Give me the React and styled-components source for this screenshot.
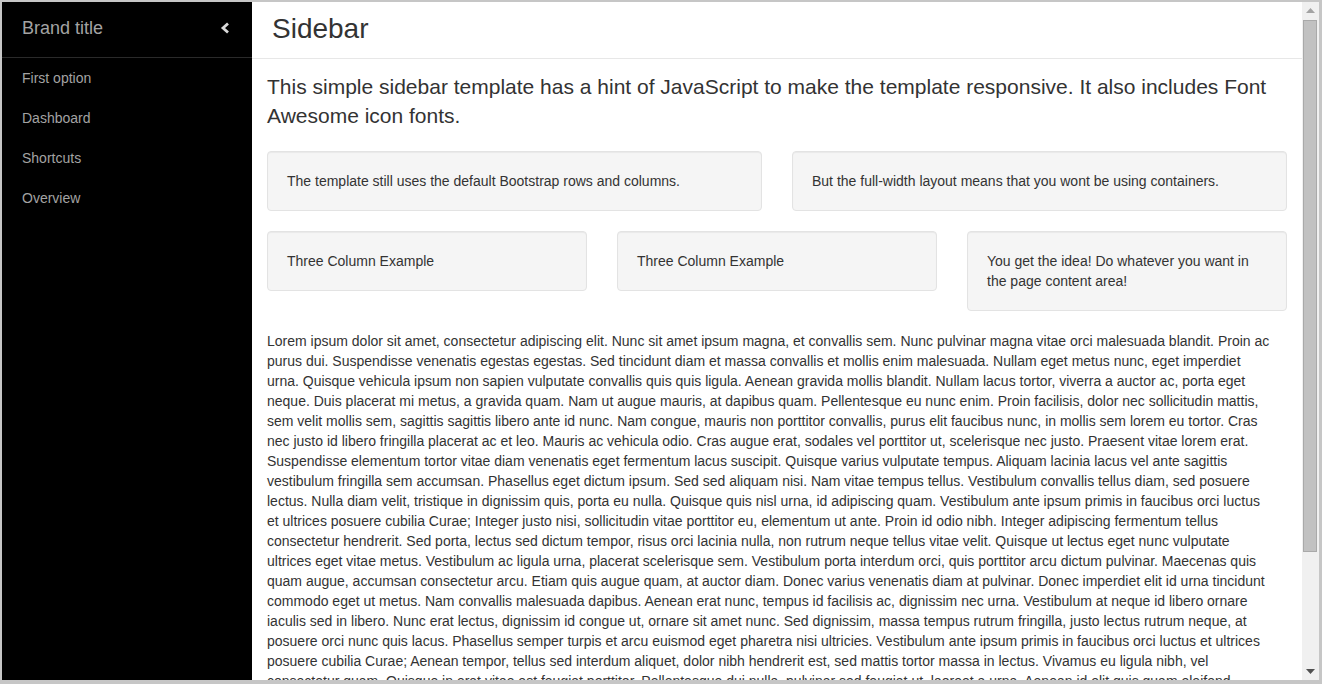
import React from 'react';
import styled, { createGlobalStyle } from 'styled-components';

const GlobalStyle = createGlobalStyle`
    html, body {
        margin : 0;
        padding : 0;
        overflow : hidden;
        background : #ffffff;
    }
    body {
        font-family : "Liberation Sans", Arial, sans-serif;
        color : #333333;
    }
`;

const Frame = styled.div`
    width : 1322px;
    height : 684px;
    box-sizing : border-box;
    border-top : 2px solid #c6c6c6;
    border-left : 2px solid #c6c6c6;
    border-right : 3px solid #c6c6c6;
    border-bottom : 4px solid #c6c6c6;
    display : flex;
    flex-direction : row;
    overflow : hidden;
`;

const Sidebar = styled.div`
    width : 250px;
    flex-shrink : 0;
    background : #000000;
`;

Sidebar.Brand = styled.div`
    height : 56px;
    box-sizing : border-box;
    padding : 0 20px 3px;
    border-bottom : 1px solid #2a2a2a;
    display : flex;
    flex-direction : row;
    align-items : center;
    justify-content : space-between;
    font-size : 18px;
    color : #a3a3a3;
`;

Sidebar.Nav = styled.nav`
    display : block;
`;

Sidebar.Toggle = styled.span`
    display : flex;
    align-items : center;
    margin-right : 1px;
`;

Sidebar.Link = styled.a`
    display : block;
    line-height : 40px;
    padding-left : 20px;
    font-size : 14px;
    color : #a3a3a3;
    text-decoration : none;
`;

const Main = styled.div`
    width : 1050px;
    flex-shrink : 0;
    overflow : hidden;
    background : #ffffff;
`;

const PageHeader = styled.div`
    height : 56px;
    border-bottom : 1px solid #e7e7e7;
    display : flex;
    align-items : center;
    padding : 0 20px;
`;

const Title = styled.h1`
    margin : 0;
    font-size : 28px;
    font-weight : 400;
    line-height : 28px;
    color : #333333;
    position : relative;
    top : -1px;
`;

const Content = styled.div`
    padding : 13px 15px 0;
`;

const Lead = styled.p`
    margin : 0 0 20px;
    font-size : 21px;
    line-height : 1.4;
    font-weight : 300;
`;

const Row = styled.div`
    display : grid;
    grid-template-columns : repeat(${(props) => props.cols}, 1fr);
    column-gap : 30px;
    align-items : start;
    margin-bottom : 20px;
`;

const Well = styled.div`
    padding : 19px;
    background : #f5f5f5;
    border : 1px solid #e3e3e3;
    border-radius : 4px;
    box-shadow : inset 0 1px 1px rgba(0, 0, 0, 0.05);
    font-size : 14px;
    line-height : 20px;
`;

const Text = styled.p`
    margin : 0;
    font-size : 14px;
    line-height : 20px;
    white-space : nowrap;
`;

const Scrollbar = styled.div`
    width : 17px;
    flex-shrink : 0;
    background : #f0f0f0;
    display : flex;
    flex-direction : column;
`;

Scrollbar.Button = styled.div`
    height : 17px;
    display : flex;
    align-items : center;
    justify-content : center;
    margin-top : ${(props) => props.bottom ? 'auto' : '0'};
`;

Scrollbar.Thumb = styled.div`
    height : 530px;
    margin : 1px 2px 0 1px;
    background : #c1c1c1;
    border : 1px solid #a9a9a9;
`;

const navItems = ['First option', 'Dashboard', 'Shortcuts', 'Overview'];

// line breaks follow the reference rendering
const loremLines = [
    'Lorem ipsum dolor sit amet, consectetur adipiscing elit. Nunc sit amet ipsum magna, et convallis sem. Nunc pulvinar magna vitae orci malesuada blandit. Proin ac',
    'purus dui. Suspendisse venenatis egestas egestas. Sed tincidunt diam et massa convallis et mollis enim malesuada. Nullam eget metus nunc, eget imperdiet',
    'urna. Quisque vehicula ipsum non sapien vulputate convallis quis quis ligula. Aenean gravida mollis blandit. Nullam lacus tortor, viverra a auctor ac, porta eget',
    'neque. Duis placerat mi metus, a gravida quam. Nam ut augue mauris, at dapibus quam. Pellentesque eu nunc enim. Proin facilisis, dolor nec sollicitudin mattis,',
    'sem velit mollis sem, sagittis sagittis libero ante id nunc. Nam congue, mauris non porttitor convallis, purus elit faucibus nunc, in mollis sem lorem eu tortor. Cras',
    'nec justo id libero fringilla placerat ac et leo. Mauris ac vehicula odio. Cras augue erat, sodales vel porttitor ut, scelerisque nec justo. Praesent vitae lorem erat.',
    'Suspendisse elementum tortor vitae diam venenatis eget fermentum lacus suscipit. Quisque varius vulputate tempus. Aliquam lacinia lacus vel ante sagittis',
    'vestibulum fringilla sem accumsan. Phasellus eget dictum ipsum. Sed sed aliquam nisi. Nam vitae tempus tellus. Vestibulum convallis tellus diam, sed posuere',
    'lectus. Nulla diam velit, tristique in dignissim quis, porta eu nulla. Quisque quis nisl urna, id adipiscing quam. Vestibulum ante ipsum primis in faucibus orci luctus',
    'et ultrices posuere cubilia Curae; Integer justo nisi, sollicitudin vitae porttitor eu, elementum ut ante. Proin id odio nibh. Integer adipiscing fermentum tellus',
    'consectetur hendrerit. Sed porta, lectus sed dictum tempor, risus orci lacinia nulla, non rutrum neque tellus vitae velit. Quisque ut lectus eget nunc vulputate',
    'ultrices eget vitae metus. Vestibulum ac ligula urna, placerat scelerisque sem. Vestibulum porta interdum orci, quis porttitor arcu dictum pulvinar. Maecenas quis',
    'quam augue, accumsan consectetur arcu. Etiam quis augue quam, at auctor diam. Donec varius venenatis diam at pulvinar. Donec imperdiet elit id urna tincidunt',
    'commodo eget ut metus. Nam convallis malesuada dapibus. Aenean erat nunc, tempus id facilisis ac, dignissim nec urna. Vestibulum at neque id libero ornare',
    'iaculis sed in libero. Nunc erat lectus, dignissim id congue ut, ornare sit amet nunc. Sed dignissim, massa tempus rutrum fringilla, justo lectus rutrum neque, at',
    'posuere orci nunc quis lacus. Phasellus semper turpis et arcu euismod eget pharetra nisi ultricies. Vestibulum ante ipsum primis in faucibus orci luctus et ultrices',
    'posuere cubilia Curae; Aenean tempor, tellus sed interdum aliquet, dolor nibh hendrerit est, sed mattis tortor massa in lectus. Vivamus eu ligula nibh, vel',
    'consectetur quam. Quisque in erat vitae est feugiat porttitor. Pellentesque dui nulla, pulvinar sed feugiat ut, laoreet a urna. Aenean id elit quis quam eleifend',
    'fermentum. Sed at nunc ligula, eget elementum nisi. Nulla facilisi. Integer sed magna non nisi tempus fermentum.',
];

const ChevronLeft = () => (
    <svg width="11" height="12" viewBox="0 0 11 12">
        <polyline points="8,1.5 3,6 8,10.5" fill="none" stroke="#d9d9d9" strokeWidth="2.8" />
    </svg>
);

const Arrow = ({ down }) => (
    <svg width="9" height="5" viewBox="0 0 9 5">
        <polygon points={down ? '0,0 9,0 4.5,5' : '0,5 9,5 4.5,0'} fill={down ? '#505050' : '#a3a3a3'} />
    </svg>
);

const App = () => {
    return (
        <Frame>
            <GlobalStyle />
            <Sidebar>
                <Sidebar.Brand>
                    <span>Brand title</span>
                    <Sidebar.Toggle><ChevronLeft /></Sidebar.Toggle>
                </Sidebar.Brand>
                <Sidebar.Nav>
                    {
                        navItems.map((item) => <Sidebar.Link href="#" key={item}>{item}</Sidebar.Link>)
                    }
                </Sidebar.Nav>
            </Sidebar>
            <Main>
                <PageHeader>
                    <Title>Sidebar</Title>
                </PageHeader>
                <Content>
                    <Lead>
                        This simple sidebar template has a hint of JavaScript to make the template responsive. It also includes Font Awesome icon fonts.
                    </Lead>
                    <Row cols={2}>
                        <Well>The template still uses the default Bootstrap rows and columns.</Well>
                        <Well>But the full-width layout means that you wont be using containers.</Well>
                    </Row>
                    <Row cols={3}>
                        <Well>Three Column Example</Well>
                        <Well>Three Column Example</Well>
                        <Well>You get the idea! Do whatever you want in the page content area!</Well>
                    </Row>
                    <Text>
                        {
                            loremLines.map((line, i) => (
                                <React.Fragment key={i}>
                                    {line}
                                    {i < loremLines.length - 1 && <br />}
                                </React.Fragment>
                            ))
                        }
                    </Text>
                </Content>
            </Main>
            <Scrollbar>
                <Scrollbar.Button><Arrow /></Scrollbar.Button>
                <Scrollbar.Thumb />
                <Scrollbar.Button bottom><Arrow down /></Scrollbar.Button>
            </Scrollbar>
        </Frame>
    );
};

export default App;
